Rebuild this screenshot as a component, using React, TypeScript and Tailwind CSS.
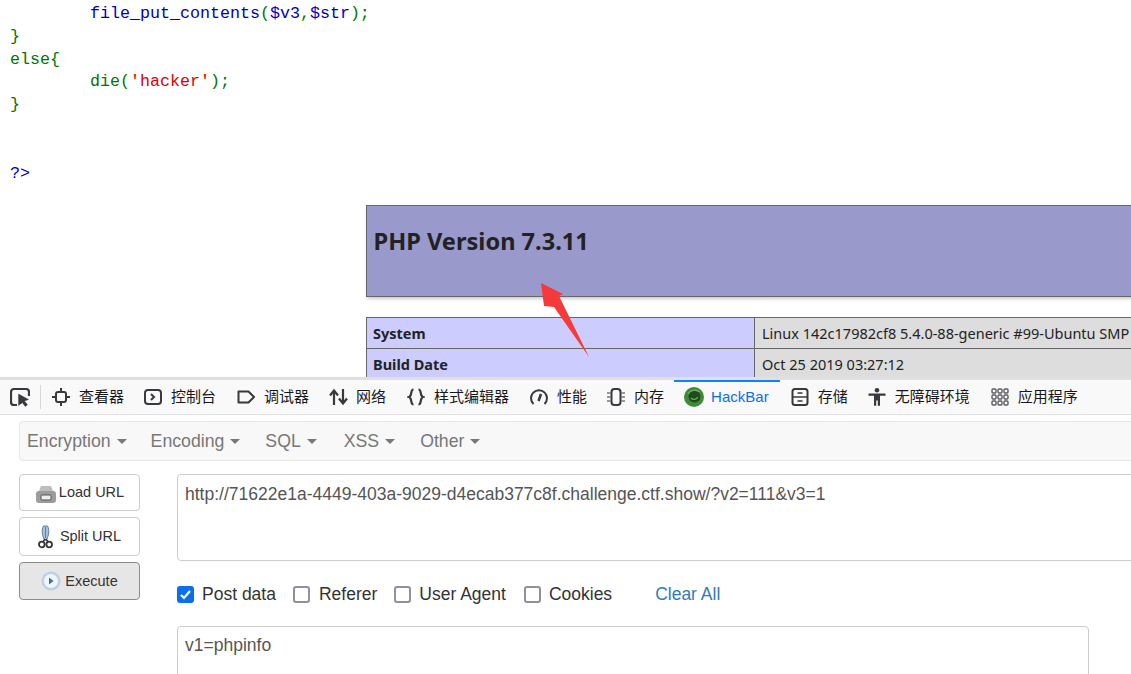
import React from "react";

function Ico({ children, w = 18, cls = "" }: { children: React.ReactNode; w?: number; cls?: string }) {
  return (
    <svg width={w} height={18} viewBox={`0 0 ${w} 18`} fill="none" stroke="#38383d" strokeWidth="2" className={`shrink-0 ${cls}`}>
      {children}
    </svg>
  );
}

const tabs: { label: string; cls: string; icon: React.ReactNode; active?: boolean }[] = [
  { label: "查看器", cls: "px-[10px]", icon: <Ico><rect x="4" y="4" width="10" height="10" rx="2" /><path d="M9 0v4M9 14v4M0 9h4M14 9h4" /></Ico> },
  { label: "控制台", cls: "px-[10px]", icon: <Ico><rect x="1" y="2" width="16" height="14" rx="3" /><path d="M7 6l3 3-3 3" /></Ico> },
  { label: "调试器", cls: "ml-[1px] px-[10px]", icon: <Ico><path d="M1.500 3.500h10l5.500 5.500-5.500 5.500h-10z" strokeLinejoin="round" /></Ico> },
  { label: "网络", cls: "px-[10px]", icon: <Ico w={20} cls="-mr-[2px]"><path d="M5 17V3M1 7.500L5 2.500 9 7.500M14 1v14M10 10.500l4 5 4-5" strokeWidth="2.200" /></Ico> },
  { label: "样式编辑器", cls: "ml-[1px] px-[10px]", icon: <Ico><path d="M6.500 1.500C3 1.500 5.500 8 2 9c3.500 1 1 7.500 4.500 7.500M11.500 1.500C15 1.500 12.500 8 16 9c-3.500 1-1 7.500-4.500 7.500" strokeWidth="2.200" /></Ico> },
  { label: "性能", cls: "ml-[1px] px-[10px]", icon: <Ico><path d="M3.500 16A8 8 0 1 1 14.500 16" /><path d="M8.500 13l2.500-7" strokeWidth="2.500" /></Ico> },
  { label: "内存", cls: "px-[10px]", icon: <Ico><rect x="4.500" y="1" width="9" height="16" rx="3" /><path d="M0 5h3.500M0 9h3.500M0 13h3.500M14.500 5h3.500M14.500 9h3.500M14.500 13h3.500" strokeWidth="1.100" /></Ico> },
  { label: "HackBar", cls: "pl-[10px] pr-[11px]", active: true, icon: (
    <svg width="20" height="20" viewBox="0 0 20 20" className="shrink-0 -mr-[2px]">
      <circle cx="10" cy="10" r="10" fill="#3f8a38" />
      <circle cx="10.500" cy="9.500" r="6" fill="#1f4a1d" />
      <path d="M4 7c2-4 8-5 12-2M7 11c2 2 5 2 7-1" stroke="#6fae68" strokeWidth="1.300" fill="none" />
    </svg>
  ) },
  { label: "存储", cls: "ml-[1px] px-[10px]", icon: <Ico><rect x="1.500" y="1" width="15" height="16" rx="2.500" /><path d="M1.500 9h15M6.500 5h5M6.500 13h5" strokeWidth="1.600" /></Ico> },
  { label: "无障碍环境", cls: "px-[10px]", icon: (
    <svg width="18" height="18" viewBox="0 0 18 18" fill="#38383d" className="shrink-0">
      <circle cx="9" cy="2.300" r="2.300" />
      <path d="M0.500 5.500h17v2.200h-5.500v10h-2.200V12.500h-1.600v5.200H6V7.700H0.500z" />
    </svg>
  ) },
  { label: "应用程序", cls: "ml-[1px] px-[10px]", icon: (
    <svg width="18" height="18" viewBox="0 0 18 18" fill="none" stroke="#5c5c61" strokeWidth="1.400" className="shrink-0">
      {[1, 7, 13].flatMap((y) => [1, 7, 13].map((x) => <rect key={`${x}-${y}`} x={x} y={y} width="4" height="4" rx="1" />))}
    </svg>
  ) },
];

function Check({ checked, label, cls, gap = "ml-[8px]" }: { checked?: boolean; label: string; cls: string; gap?: string }) {
  return (
    <div className={`flex items-center ${cls}`}>
      {checked ? (
        <span className="w-[17px] h-[17px] rounded-[3px] bg-[#0a6fe8] flex items-center justify-center">
          <svg width="13" height="13" viewBox="0 0 13 13" fill="none" stroke="#fff" strokeWidth="2.200"><path d="M2 7l3 3 6-7" /></svg>
        </span>
      ) : (
        <span className="w-[17px] h-[17px] rounded-[3px] border-2 border-[#8f8f9d] bg-white" />
      )}
      <span className={`${gap} text-[17.500px] leading-[24px] text-[#333]`}>{label}</span>
    </div>
  );
}

function Menu({ label, cls }: { label: string; cls: string }) {
  return (
    <div className={`flex items-center text-[17.700px] text-[#777] ${cls}`}>
      {label}
      <span className="ml-[6px] mt-[2px] w-0 h-0 border-x-[5px] border-x-transparent border-t-[5px] border-t-[#777]" />
    </div>
  );
}

function Btn({ label, icon, cls, gap }: { label: string; icon: React.ReactNode; cls: string; gap: string }) {
  return (
    <div className={`w-[121px] flex items-center justify-center rounded-[4px] border text-[14.500px] text-[#333] ${cls}`}>
      {icon}
      <span className={gap}>{label}</span>
    </div>
  );
}

export default function App() {
  const code: [string, string][][] = [
    [["        ", "#000"], ["file_put_contents", "#0000bb"], ["(", "#007700"], ["$v3", "#0000bb"], [",", "#007700"], ["$str", "#0000bb"], [");", "#007700"]],
    [["}", "#007700"]],
    [["else{", "#007700"]],
    [["        ", "#000"], ["die(", "#007700"], ["'hacker'", "#dd0000"], [");", "#007700"]],
    [["}", "#007700"]],
    [["", "#000"]],
    [["", "#000"]],
    [["?>", "#0000bb"]],
  ];
  return (
    <div className="relative w-[1131px] h-[674px] overflow-hidden bg-white font-['Liberation_Sans',sans-serif]">
      <div className="h-[377px] overflow-hidden">
        <pre className="pl-[10px] pt-[3px] h-[205px] font-['Liberation_Mono',monospace] text-[16.67px] leading-[22.8px]">
          {code.map((line, i) => (
            <div key={i} className="h-[22.8px]">
              {line.map(([t, c], j) => (
                <span key={j} style={{ color: c }}>{t}</span>
              ))}
            </div>
          ))}
        </pre>
        <div className="ml-[366px] w-[934px] font-['Noto_Sans',sans-serif] text-[#222]">
          <div className="h-[92px] border border-[#666] bg-[#9999cc] shadow-[1px_2px_3px_#ccc] pl-[6.500px] pt-[18px] text-[23.600px] leading-[34px] font-bold">
            PHP Version 7.3.11
          </div>
          <div className="mt-[20px] border border-[#666] text-[14.500px]">
            <div className="flex h-[31px] border-b border-[#666]">
              <div className="w-[388px] shrink-0 bg-[#ccccff] border-r border-[#666] pl-[6px] leading-[31px] font-bold">System</div>
              <div className="flex-1 min-w-0 overflow-hidden bg-[#dddddd] pl-[7px] leading-[31px] whitespace-nowrap">Linux 142c17982cf8 5.4.0-88-generic #99-Ubuntu SMP</div>
            </div>
            <div className="flex h-[31px]">
              <div className="w-[388px] shrink-0 bg-[#ccccff] border-r border-[#666] pl-[6px] leading-[31px] font-bold">Build Date</div>
              <div className="flex-1 min-w-0 bg-[#dddddd] pl-[7px] leading-[31px]">Oct 25 2019 03:27:12</div>
            </div>
          </div>
        </div>
      </div>

      <div className="h-[38px] bg-[#f9f9fa] border-t-[3px] border-t-[#e0e0e2] border-b border-b-[#e0e0e2] flex font-['Liberation_Sans','Noto_Sans_CJK_SC',sans-serif] text-[15px] text-[#18181a]">
        <div className="w-[40px] flex items-center pl-[10px]">
          <svg width="20" height="19" viewBox="0 0 20 19" fill="none" stroke="#38383d" strokeWidth="2.200">
            <path d="M7 17H4a3 3 0 0 1-3-3V4a3 3 0 0 1 3-3h12a3 3 0 0 1 3 3v4" />
            <path d="M8.500 6l10 5.500-4 1.500 3 3.800-2.300 1.700-2.800-3.800-3.900 2.800z" fill="#38383d" strokeWidth="0.400" />
          </svg>
        </div>
        <div className="w-px h-[24px] self-center bg-[#d7d7db] mr-[1px]" />
        {tabs.map((t) => (
          <div
            key={t.label}
            className={`relative flex items-center ${t.cls} ${t.active ? "text-[#0a6fe8]" : ""}`}
          >
            {t.active && <span className="absolute left-0 right-0 top-0 h-[2px] bg-[#0a84ff]" />}
            {t.icon}
            <span className="ml-[9px] whitespace-nowrap">{t.label}</span>
          </div>
        ))}
      </div>

      <div className="ml-[19px] mt-[6px] w-[1200px] h-[40px] rounded-[4px] border border-[#e7e7e7] bg-[#f8f8f8] flex items-center">
        <Menu label="Encryption" cls="ml-[7px]" />
        <Menu label="Encoding" cls="ml-[24px]" />
        <Menu label="SQL" cls="ml-[25px]" />
        <Menu label="XSS" cls="ml-[27px]" />
        <Menu label="Other" cls="ml-[25px]" />
      </div>

      <div className="flex mt-[13px] ml-[19px]">
        <div className="w-[121px] flex flex-col gap-[6px]">
          <Btn
            label="Load URL"
            cls="h-[37px] border-[#ccc] bg-white"
            gap="ml-[2px] mt-[1px]"
            icon={
              <svg width="22" height="19" viewBox="0 0 22 19" className="mt-[3px]">
                <path d="M4 6l2-5h10l2 5z" fill="#bdbdbd" />
                <rect x="1" y="6" width="20" height="12" rx="3" fill="#9c9c9c" />
                <rect x="6" y="10" width="10" height="5" rx="1" fill="#eeeeee" stroke="#555" />
              </svg>
            }
          />
          <Btn
            label="Split URL"
            cls="h-[39px] border-[#ccc] bg-white"
            gap="ml-[7px]"
            icon={
              <svg width="15" height="24" viewBox="0 0 15 24" fill="none" className="mt-[1px]">
                <path d="M5.500 1C3 5 4.500 11 6.500 15h2C10.500 11 12 5 9.500 1z" fill="#a9c4dc" stroke="#5f7f9c" />
                <path d="M7.500 2v11" stroke="#5f7f9c" />
                <circle cx="3.800" cy="19.500" r="2.800" stroke="#333" strokeWidth="1.800" />
                <circle cx="11.200" cy="19.500" r="2.800" stroke="#333" strokeWidth="1.800" />
                <path d="M5 17l2-3M10 17l-2-3" stroke="#333" strokeWidth="1.500" />
              </svg>
            }
          />
          <Btn
            label="Execute"
            cls="h-[38px] border-[#8c8c8c] bg-[#e6e6e6]"
            gap="ml-[4px] mt-[1px]"
            icon={
              <svg width="20" height="20" viewBox="0 0 20 20">
                <circle cx="10" cy="10" r="9.500" fill="#bcd0ea" />
                <circle cx="10" cy="10" r="7" fill="#f2f6fb" />
                <path d="M8 6.500l4.500 3.500-4.500 3.500z" fill="#3a6ea5" />
              </svg>
            }
          />
        </div>
        <div className="ml-[37px] flex-1">
          <div className="w-[1000px] h-[87px] rounded-[4px] border border-[#ccc] bg-white px-[7px] pt-[7px] text-[17.500px] leading-[24px] text-[#555] whitespace-nowrap">
            http://71622e1a-4449-403a-9029-d4ecab377c8f.challenge.ctf.show/?v2=111&amp;v3=1
          </div>
          <div className="flex items-center h-[24px] mt-[21px]">
            <Check checked label="Post data" cls="" />
            <Check label="Referer" cls="ml-[17px]" gap="ml-[9px]" />
            <Check label="User Agent" cls="ml-[17px]" />
            <Check label="Cookies" cls="ml-[18px]" />
            <span className="ml-[43px] text-[17.500px] text-[#337ab7]">Clear All</span>
          </div>
          <div className="w-[912px] h-[100px] mt-[20px] rounded-[4px] border border-[#ccc] bg-white px-[7px] pt-[6px] text-[17.500px] leading-[24px] text-[#555]">
            v1=phpinfo
          </div>
        </div>
      </div>

      <svg className="absolute left-[540px] top-[282px]" width="50" height="76" viewBox="0 0 50 76">
        <path d="M1 1L23 12 19 14 49 75 14 25 4 24z" fill="#f53a3a" />
      </svg>
    </div>
  );
}
